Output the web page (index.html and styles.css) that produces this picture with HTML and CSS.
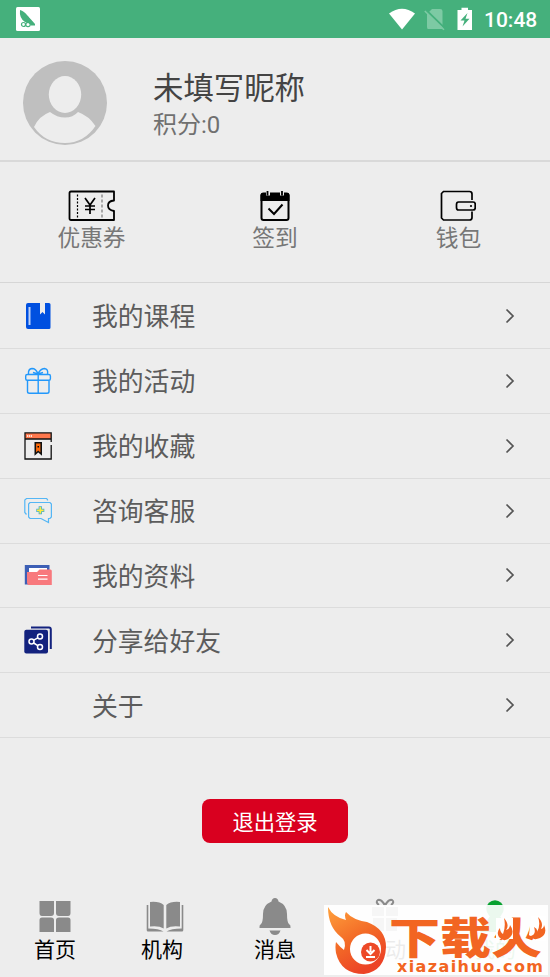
FILE: index.html
```html
<!DOCTYPE html>
<html lang="zh-CN">
<head>
<meta charset="utf-8">
<title>我的</title>
<link rel="stylesheet" href="styles.css">
</head>
<body>
<header class="status">
  <svg class="app" width="24" height="24" viewBox="0 0 24 24"><rect width="24" height="24" rx="1.5" fill="#fff"/><path d="M4 3Q8 4 12 9L19 17V18.500H15Q13 15 9 15Q3 11 4 3Z" fill="#45b07c"/><path d="M8 4l9 10" stroke="#fff" stroke-width=".8" stroke-dasharray="1 1"/><g fill="none" stroke="#45b07c" stroke-width="1.2"><circle cx="7.500" cy="17.500" r="2"/><circle cx="12" cy="17.500" r="2.200"/></g></svg>
  <div class="signals">
    <svg width="28" height="24" viewBox="0 0 28 24"><path d="M1 6.500Q14-3 27 6.500L14 22.500Z" fill="#fff"/></svg>
    <svg width="22" height="24" viewBox="0 0 22 24"><path d="M8 2H16Q18.500 2 18.500 4V22H4Q3 22 3 20V7Z" fill="#7dcaa4"/><path d="M2.500 3.500L21 21.500" stroke="#45b07c" stroke-width="2"/><path d="M.8 4L20 22.800" stroke="#7dcaa4" stroke-width="1.600"/></svg>
    <svg width="16" height="24" viewBox="0 0 16 24"><path d="M.5 3H4.500V.8H11V3H15V23H.5Z" fill="#fff"/><path d="M10.500 6L3.500 13.500H7.500L5.500 19.500L12.500 11.800H8.500Z" fill="#45b07c"/></svg>
    <span class="time">10:48</span>
  </div>
</header>
<section class="profile">
  <svg width="84" height="84" viewBox="0 0 84 84"><circle cx="42" cy="42" r="42" fill="#bfbfbf"/><ellipse cx="42" cy="33.500" rx="16.200" ry="18.500" fill="#ededed"/><path d="M27 51Q34 56.500 42 56.500Q50 56.500 55 51Q66 55 72.500 65Q61 82 42 82Q22 82 11 66Q16 55 27 51Z" fill="#ededed"/></svg>
  <div class="who"><h1>未填写昵称</h1><p>积分:0</p></div>
</section>
<section class="quick">
  <div class="q q1"><svg width="48" height="32" viewBox="0 0 48 32" fill="none" stroke="#000" stroke-width="1.800"><path d="M3 1.500H46V10.500Q40 11 40 15.500T46 21V30H3Q1.500 30 1.500 28.500V3Q1.500 1.500 3 1.500Z" stroke-linejoin="round"/><path d="M9.500 4.500V28" stroke-width="1.200" stroke-dasharray="2 1.500"/><path d="M34 4.500V28" stroke="#777" stroke-width="1.200" stroke-dasharray="3 2"/><path d="M17 8L22 15L27 8M22 15V24M17 16H27M17 19.500H27" stroke-width="1.700"/></svg><span>优惠券</span></div>
  <div class="q q2"><svg width="30" height="32" viewBox="0 0 30 32"><rect x="1.500" y="3.500" width="27" height="26.500" rx="2" fill="none" stroke="#000" stroke-width="2"/><path d="M.5 11V5Q.5 3 3 3H27Q29.500 3 29.500 5V11Z"/><path d="M8 1V5.500M22 1V5.500" stroke="#ededed" stroke-width="4"/><path d="M7.500 1V5.500M22 1V5.500" stroke="#000" stroke-width="1.800"/><path d="M8.500 18.500L14 24L22.500 14.500" fill="none" stroke="#000" stroke-width="2"/></svg><span>签到</span></div>
  <div class="q q3"><svg width="36" height="32" viewBox="0 0 36 32" fill="none" stroke="#000" stroke-width="1.700"><path d="M32 10V4Q32 1.500 29.500 1.500H3.500L1.500 3.500V28L3.500 30H29.500Q32 30 32 27.500V21.500"/><path d="M18.500 12H33Q35.200 12 35.200 14V18Q35.200 20 33 20H18.500Q16.500 20 16.500 17.500V14.500Q16.500 12 18.500 12Z"/><circle cx="31" cy="16" r="1.100" fill="#000" stroke="none"/></svg><span>钱包</span></div>
</section>
<nav class="menu">
  <div class="row"><svg class="ic" width="28" height="28" viewBox="0 0 28 28"><path d="M4 1H16V12.500L18.500 10L21 12.500V1H25Q26.500 1 26.500 2.500V25.500Q26.500 27 25 27H4Q2 27 2 25V3Q2 1 4 1Z" fill="#0050e0"/><path d="M5.500 5V23" stroke="#bfd2f7" stroke-width="2"/></svg><span>我的课程</span><svg class="chev" width="10" height="16" viewBox="0 0 10 16"><path d="M1.500 1.500L8 8L1.500 14.500"/></svg></div>
  <div class="row"><svg class="ic" width="28" height="28" viewBox="0 0 28 28" fill="none" stroke="#2298fb" stroke-width="1.400"><rect x="1.700" y="7.500" width="24.700" height="5.700" rx="1.500"/><path d="M3.500 13.500V24.500Q3.500 26.300 5.500 26.300H23Q25 26.300 25 24.500V13.500M14.200 7.500V26M14 7Q12 1.500 8 1.500Q4 2 4.500 7M14 7Q16 2 20.500 1.500Q24.500 2 23.500 7M14 7L9 5.500M14 7L19 5.500"/></svg><span>我的活动</span><svg class="chev" width="10" height="16" viewBox="0 0 10 16"><path d="M1.500 1.500L8 8L1.500 14.500"/></svg></div>
  <div class="row"><svg class="ic" width="28" height="28" viewBox="0 0 28 28"><path d="M1 1H27V7H1Z" fill="#ff784d"/><path d="M27.200 10V.8H1V27H27.200V13" fill="none" stroke="#111" stroke-width="1.300"/><path d="M1 7H27" stroke="#111" stroke-width="1.500"/><path d="M3 4H8" stroke="#fff" stroke-width="1.500" stroke-dasharray="1.300 .7"/><path d="M11.300 10.800H17.200V22L14.200 19.500L11.300 22Z" fill="#ff6b0b" stroke="#111" stroke-width="1.600"/><path d="M13.500 14H15V15.500H13.500Z"/></svg><span>我的收藏</span><svg class="chev" width="10" height="16" viewBox="0 0 10 16"><path d="M1.500 1.500L8 8L1.500 14.500"/></svg></div>
  <div class="row"><svg class="ic" width="28" height="28" viewBox="0 0 28 28" fill="none" stroke="#54b6f5" stroke-width="1.200"><path d="M23.500 3.500V2.500L22.500 1.500H2.500L.8 3V15.500L2.500 17.500"/><path d="M6 5.500H26L27.400 7V20L26 21.500H24.500V25.500L17 21.500H6L4.600 20V7Z"/><path d="M16.300 9.300V17.300M12.300 13.300H20.300" stroke="#45add0" stroke-width="3.300"/><path d="M16.300 10V16.600M13 13.300H19.600" stroke="#ffeb3b" stroke-width="1.700"/></svg><span>咨询客服</span><svg class="chev" width="10" height="16" viewBox="0 0 10 16"><path d="M1.500 1.500L8 8L1.500 14.500"/></svg></div>
  <div class="row"><svg class="ic" width="28" height="28" viewBox="0 0 28 28"><path d="M.8 4H25.500V23.500H.8Z" fill="#3d5fb5"/><path d="M5 7H23V12H5Z" fill="#fff"/><path d="M4 11H13L15.500 8.500H26.500Q27.800 8.500 27.800 10V24H4L3 22V11Z" fill="#f8797d"/><path d="M14 14.500H23.500M14 18.200H23.500" stroke="#fff" stroke-width="1.200"/></svg><span>我的资料</span><svg class="chev" width="10" height="16" viewBox="0 0 10 16"><path d="M1.500 1.500L8 8L1.500 14.500"/></svg></div>
  <div class="row"><svg class="ic" width="28" height="28" viewBox="0 0 28 28"><rect x=".3" y="3.800" width="23.700" height="23.700" rx="2" fill="#13227e"/><path d="M7 1.500H25Q26.800 1.500 26.800 3.500V23" fill="none" stroke="#13227e" stroke-width="2"/><g fill="none" stroke="#fff" stroke-width="1.500"><circle cx="7.500" cy="15.500" r="2.500"/><circle cx="16" cy="10.500" r="2.500"/><circle cx="16" cy="21" r="2.500"/><path d="M9.700 14.200L13.800 11.800M9.700 17L13.800 19.700"/></g></svg><span>分享给好友</span><svg class="chev" width="10" height="16" viewBox="0 0 10 16"><path d="M1.500 1.500L8 8L1.500 14.500"/></svg></div>
  <div class="row"><i class="ic"></i><span>关于</span><svg class="chev" width="10" height="16" viewBox="0 0 10 16"><path d="M1.500 1.500L8 8L1.500 14.500"/></svg></div>
</nav>
<button class="logout">退出登录</button>
<footer class="tabs">
  <div class="tab"><svg width="40" height="40" viewBox="0 0 40 40" fill="#8a8a8a"><path d="M4.500 4H19V16Q19 19 16 19H7Q4.500 19 4.500 16ZM21 4H35.500V16Q35.500 19 33 19H24Q21 19 21 16ZM4.500 35V23Q4.500 20.500 7 20.500H16Q19 20.500 19 23V35ZM21 35V23Q21 20.500 24 20.500H33Q35.500 20.500 35.500 23V35Z"/></svg><span>首页</span></div>
  <div class="tab t2"><svg width="40" height="40" viewBox="0 0 40 40" fill="#8a8a8a"><path d="M5 5Q14 4 18.700 8V31.500Q14 28.500 5 29.500ZM35 5Q26 4 21.300 8V31.500Q26 28.500 35 29.500Z"/><path d="M1.700 8H3.300V31.500Q14 31.500 18.500 34.500H3Q1.700 34.500 1.700 33ZM38.300 8H36.700V31.500Q26 31.500 21.500 34.500H37Q38.300 34.500 38.300 33Z"/></svg><span>机构</span></div>
  <div class="tab"><svg width="40" height="40" viewBox="0 0 40 40" fill="#8a8a8a"><path d="M20 1Q23 1 23.500 4.500Q32 8 32 17Q32 25 34 27Q36 28 35.500 31H4.500Q4 28 6 27Q8 25 8 17Q8 8 16.500 4.500Q17 1 20 1ZM14.500 33.500H25.500Q24 38 20 38Q16 38 14.500 33.500Z"/></svg><span>消息</span></div>
  <div class="tab"><svg width="40" height="40" viewBox="0 0 40 40" fill="#8a8a8a"><path d="M7 10H19V19H7ZM21 10H33V19H21ZM8 21H19V34H8ZM21 21H32V34H21Z"/><path d="M20 9Q17 2 13 3Q10 5 14 8M20 9Q23 2 27 3Q30 5 26 8" fill="none" stroke="#8a8a8a" stroke-width="2"/></svg><span>活动</span></div>
  <div class="tab me"><svg width="40" height="40" viewBox="0 0 40 40" fill="#07a12f"><circle cx="20" cy="12" r="8.700"/><path d="M15 19H25L35 35H5Z"/></svg><span>我的</span></div>
</footer>
<div class="mark">
  <svg class="flame" width="66" height="70" viewBox="0 0 66 70"><defs><linearGradient id="g" x1="0" y1="0" x2=".5" y2="1"><stop offset="0" stop-color="#ffa13c"/><stop offset=".55" stop-color="#f36b27"/><stop offset="1" stop-color="#ec4326"/></linearGradient></defs><path d="M4 2Q9 12 22 15Q20 10 22 7Q29 15 43 17Q62 24 62 42Q61 66 40 69Q17 69 12 48Q11 41 12 37Q16 42 20 45Q23 36 17 32Q4 22 4 2Z" fill="url(#g)"/><circle cx="41.500" cy="44" r="15.500" fill="#fff"/><circle cx="46.500" cy="47" r="9.500" fill="#ed4927"/><path d="M46.500 41V47M42.500 45L46.500 49L50.500 45M42 52H51" fill="none" stroke="#fff" stroke-width="2"/></svg>
  <div class="brand">下载火</div>
  <svg class="sparks" width="50" height="34" viewBox="0 0 50 34"><path d="M0 4H17V25H4L0 29ZM35 2H50V27H40L33 21Z" fill="#fff"/><path d="M8 4Q14 11 10 16Q14 15 14 11Q20 19 12 25Q7 28 3 23Q0 18 4 14Q4 18 7 20Q10 12 8 4ZM42 3Q48 9 45 15Q48 14 48 11Q52 20 44 24Q37 27 33 22Q41 22 38 13Q42 15 41 18Q45 11 42 3Z" fill="#f26522"/></svg>
  <div class="url">xiazaihuo.com</div>
</div>
</body>
</html>
```
FILE: styles.css
```css
* { box-sizing: border-box; }
body {
  margin: 0;
  width: 550px;
  height: 977px;
  position: relative;
  overflow: hidden;
  background: #ededed;
  font-family: Roboto, "Noto Sans CJK SC", sans-serif;
  display: flex;
  flex-direction: column;
}
svg { display: block; flex: none; }
.status {
  height: 38px;
  background: #45b07c;
  display: flex;
  align-items: center;
  justify-content: space-between;
  padding: 0 13px 0 16px;
}
.signals { display: flex; align-items: center; }
.signals svg:nth-child(1) { margin-right: 8px; }
.signals svg:nth-child(2) { margin-right: 11px; }
.signals svg:nth-child(3) { margin-right: 11px; }
.time { color: #fff; font-size: 21px; font-weight: 500; line-height: 38px; padding-top: 2px; width: 53px; white-space: nowrap; }
.profile {
  height: 124px;
  border-bottom: 2px solid #d9d9d9;
  display: flex;
  padding: 23px 0 0 23px;
}
.who { padding: 6px 0 0 46px; }
.who h1 { margin: 0; font-size: 30.4px; line-height: 44px; font-weight: 400; color: #444; }
.who p { margin: -1px 0 0; font-size: 24px; line-height: 30px; color: #707070; }
.quick {
  height: 121px;
  border-bottom: 1px solid #d6d6d6;
  display: grid;
  grid-template-columns: 183px 184px 183px;
  padding-top: 28px;
}
.q { display: flex; flex-direction: column; align-items: center; font-size: 22.7px; line-height: 34px; color: #777; }
.q3 svg { margin-right: 2px; }
.menu { flex: none; }
.row {
  height: 64.85px;
  border-bottom: 1px solid #dcdcdc;
  display: flex;
  align-items: center;
  padding: 0 35px 0 24px;
  font-size: 25.8px;
  line-height: 38px;
  color: #5c5c5c;
}
.row:first-child { height: 66px; }
.ic { width: 28px; margin-right: 40px; }
.row span { flex: 1; padding-top: 3px; }
.chev path { fill: none; stroke: #555; stroke-width: 1.7; }
.logout {
  width: 146px;
  height: 44px;
  margin: 61px auto 0;
  padding: 0;
  border: 0;
  border-radius: 8px;
  background: #d9001f;
  color: #fff;
  font: 400 21.3px/40px "Noto Sans CJK SC", sans-serif;
}
.tabs { display: grid; grid-template-columns: repeat(5, 110px); margin-top: 54px; }
.tab { display: flex; flex-direction: column; align-items: center; font-size: 21px; line-height: 26px; color: #000; }
.t2 span { margin-right: 6px; }
.me { color: #07a12f; }
.mark {
  position: absolute;
  left: 324px;
  top: 905px;
  width: 224px;
  height: 70px;
  background: rgba(255, 255, 255, .92);
}
.flame { position: absolute; left: 0; top: 0; }
.brand {
  position: absolute;
  left: 65px;
  top: 5px;
  font: 900 51px/52px "Noto Sans CJK SC", sans-serif;
  color: #f26522;
  white-space: nowrap;
  transform: scaleY(.84);
}
.sparks { position: absolute; left: 172px; top: 9px; }
.url {
  position: absolute;
  left: 73px;
  top: 53px;
  font: 700 16px/18px "DejaVu Sans", sans-serif;
  letter-spacing: 1.4px;
  color: #f26522;
}
```
